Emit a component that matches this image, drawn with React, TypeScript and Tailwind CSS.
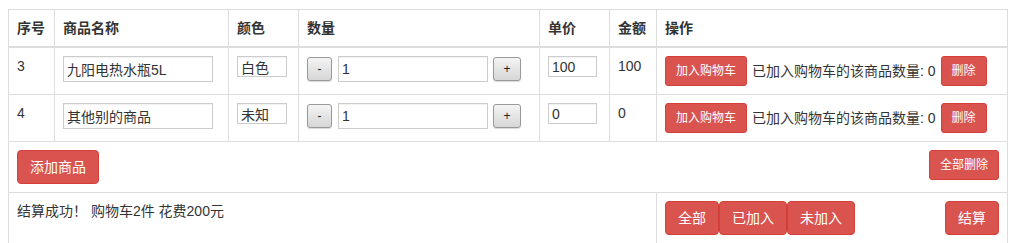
import React from 'react';

const rows = [
  { id: 3, name: '九阳电热水瓶5L', color: '白色', qty: 1, price: 100, total: 100 },
  { id: 4, name: '其他别的商品', color: '未知', qty: 1, price: 0, total: 0 },
];

const cell = 'border border-[#ddd] p-2 align-top leading-[20px]';
const inputCls =
  'border border-[#ccc] bg-white px-[3px] text-[14px] text-[#333] outline-none shadow-[inset_0_1px_1px_rgba(0,0,0,0.06)]';
const stepBtn =
  'h-[24px] rounded-[3px] border border-[#999] bg-gradient-to-b from-[#f4f4f4] to-[#d6d6d6] text-[12px] leading-none text-[#222] shadow-[0_1px_1px_rgba(0,0,0,0.15)]';
const btnSm =
  'h-[30px] rounded-[3px] border border-[#d43f3a] bg-[#d9534f] px-[10px] text-[12px] leading-[18px] text-white';
const btn =
  'h-[34px] rounded-[4px] border border-[#d43f3a] bg-[#d9534f] px-[12px] text-[14px] leading-[20px] text-white';

export default function App() {
  return (
    <div className="bg-white pt-[9px] pl-[8px] font-['Liberation_Sans','Noto_Sans_CJK_SC',sans-serif] text-[14px] text-[#333]">
      <table className="w-[999px] table-fixed border-collapse border border-[#ddd]">
        <colgroup>
          <col className="w-[46px]" />
          <col className="w-[174px]" />
          <col className="w-[70px]" />
          <col className="w-[241px]" />
          <col className="w-[70px]" />
          <col className="w-[47px]" />
          <col className="w-[351px]" />
        </colgroup>
        <thead>
          <tr>
            {['序号', '商品名称', '颜色', '数量', '单价', '金额', '操作'].map((h) => (
              <th key={h} className="border border-b-2 border-[#ddd] p-2 text-left font-bold leading-[20px]">
                {h}
              </th>
            ))}
          </tr>
        </thead>
        <tbody>
          {rows.map((r) => (
            <tr key={r.id}>
              <td className={cell}>{r.id}</td>
              <td className={cell}>
                <input className={`${inputCls} h-[26px] w-[150px]`} defaultValue={r.name} />
              </td>
              <td className={cell}>
                <input className={`${inputCls} h-[21px] w-[50px] px-[2px]`} defaultValue={r.color} />
              </td>
              <td className={cell}>
                <div className="flex items-center">
                  <button className={`${stepBtn} w-[25px]`}>-</button>
                  <input className={`${inputCls} ml-[6px] h-[26px] w-[150px]`} defaultValue={r.qty} />
                  <button className={`${stepBtn} ml-[5px] w-[28px]`}>+</button>
                </div>
              </td>
              <td className={cell}>
                <input className={`${inputCls} h-[21px] w-[49px]`} defaultValue={r.price} />
              </td>
              <td className={cell}>{r.total}</td>
              <td className={cell}>
                <div className="flex items-center">
                  <button className={btnSm}>加入购物车</button>
                  <span className="mx-[5px]">已加入购物车的该商品数量: 0</span>
                  <button className={btnSm}>删除</button>
                </div>
              </td>
            </tr>
          ))}
          <tr>
            <td colSpan={7} className={cell}>
              <div className="flex items-start justify-between">
                <button className={btn}>添加商品</button>
                <button className={btnSm}>全部删除</button>
              </div>
            </td>
          </tr>
          <tr>
            <td colSpan={6} className={cell}>
              结算成功！ 购物车2件 花费200元
            </td>
            <td className={cell}>
              <div className="flex items-start justify-between">
                <div className="flex">
                  <button className={btn}>全部</button>
                  <button className={btn}>已加入</button>
                  <button className={btn}>未加入</button>
                </div>
                <button className={btn}>结算</button>
              </div>
            </td>
          </tr>
        </tbody>
      </table>
    </div>
  );
}
